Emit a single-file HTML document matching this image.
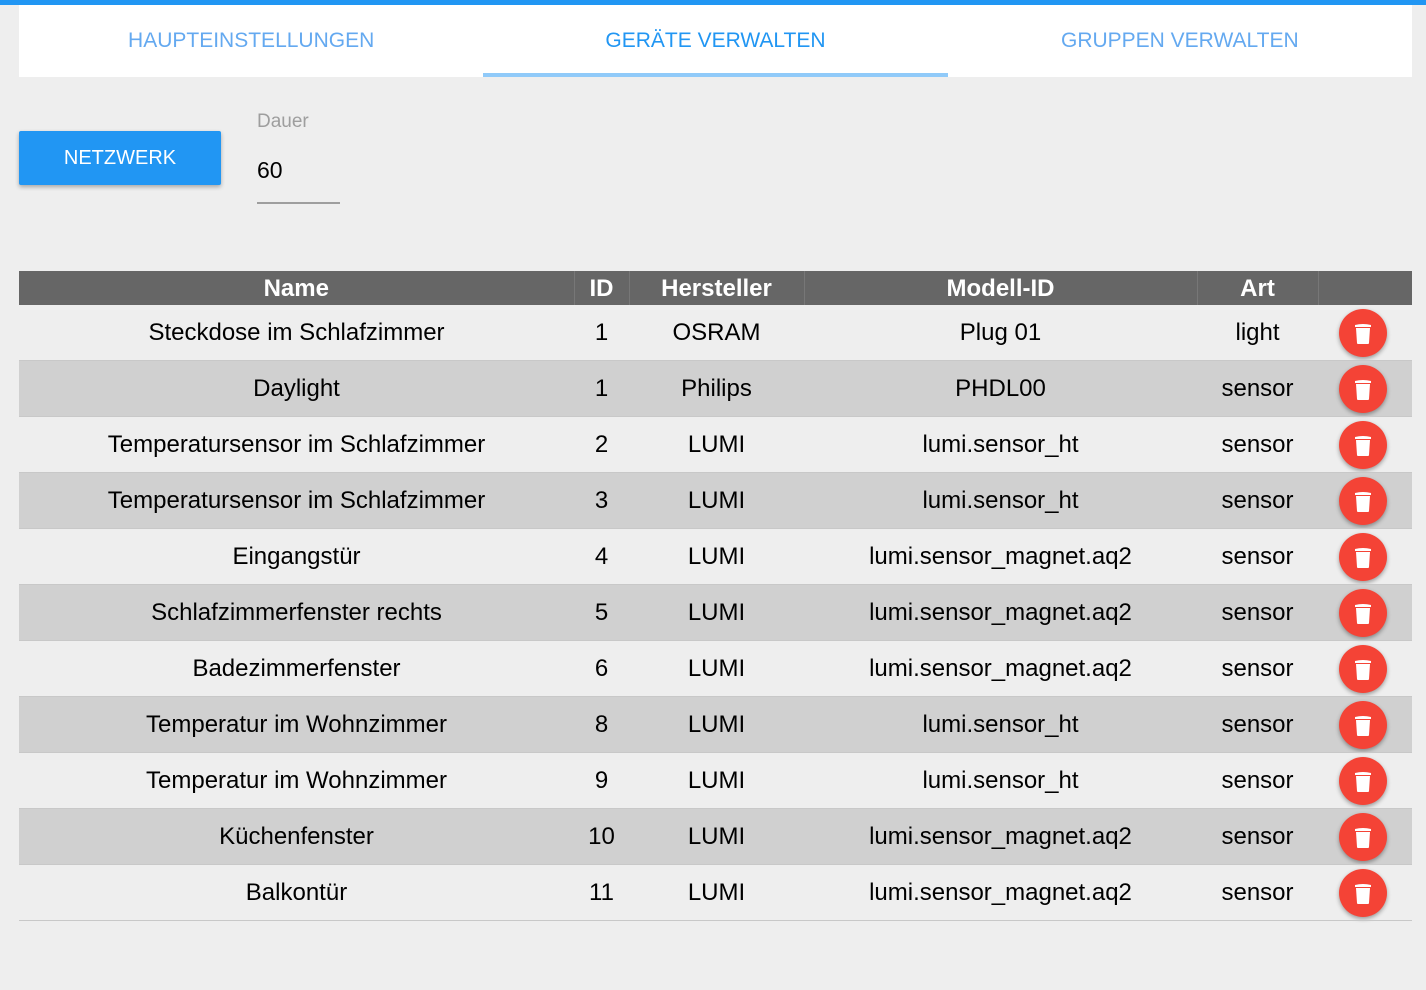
<!DOCTYPE html>
<html><head><meta charset="utf-8"><style>
body{margin:0;background:#eeeeee;font-family:"Liberation Sans",Arial,sans-serif;width:1426px;height:990px;overflow:hidden;position:relative}
.top{position:absolute;left:0;top:0;width:1426px;height:5px;background:#2196f3}
.tabs{position:absolute;left:19px;top:5px;width:1393px;height:72px;background:#fff;display:flex}
.tab{flex:1;text-align:center;line-height:72px;font-size:21px;color:#64a9f0;position:relative}
.tab.a{color:#2196f3}
.tab.a:after{content:"";position:absolute;left:0;right:0;bottom:0;height:4px;background:#90caf9}
.btn{position:absolute;left:19px;top:131px;width:202px;height:54px;background:#2196f3;color:#fff;font-size:20px;text-align:center;line-height:54px;border-radius:2px;box-shadow:0 2px 4px rgba(0,0,0,.3)}
.lbl{position:absolute;left:257px;top:111px;font-size:19px;color:#9e9e9e}
.val{position:absolute;left:257px;top:157px;font-size:23px;color:#000}
.ul{position:absolute;left:257px;top:202px;width:83px;height:2px;background:#9e9e9e}
table{position:absolute;left:19px;top:271px;width:1393px;border-collapse:collapse;font-size:24px}
th{background:#666;color:#fff;height:33px;padding:1px 0 0;font-weight:bold;border-left:1px solid #777}
th:first-child{border-left:none}
td{height:54px;padding:1px 0 0;text-align:center;border-bottom:1px solid #c8c8c8}
#b tr:nth-child(even) td{background:#d0d0d0}
.del{width:48px;height:48px;border-radius:50%;background:#f44336;margin:-1px 0 0 21px;box-shadow:0 2px 4px rgba(0,0,0,.35);display:flex;align-items:center;justify-content:center}
</style></head><body>
<div class="top"></div>
<div class="tabs"><div class="tab">HAUPTEINSTELLUNGEN</div><div class="tab a">GERÄTE VERWALTEN</div><div class="tab">GRUPPEN VERWALTEN</div></div>
<div class="btn">NETZWERK</div>
<div class="lbl">Dauer</div><div class="val">60</div><div class="ul"></div>
<table>
<colgroup><col style="width:555px"><col style="width:55px"><col style="width:175px"><col style="width:393px"><col style="width:121px"><col style="width:94px"></colgroup>
<thead><tr><th>Name</th><th>ID</th><th>Hersteller</th><th>Modell-ID</th><th>Art</th><th></th></tr></thead>
<tbody id="b"></tbody>
</table>
<script>
var d=[["Steckdose im Schlafzimmer",1,"OSRAM","Plug 01","light"],["Daylight",1,"Philips","PHDL00","sensor"],["Temperatursensor im Schlafzimmer",2,"LUMI","lumi.sensor_ht","sensor"],["Temperatursensor im Schlafzimmer",3,"LUMI","lumi.sensor_ht","sensor"],["Eingangstür",4,"LUMI","lumi.sensor_magnet.aq2","sensor"],["Schlafzimmerfenster rechts",5,"LUMI","lumi.sensor_magnet.aq2","sensor"],["Badezimmerfenster",6,"LUMI","lumi.sensor_magnet.aq2","sensor"],["Temperatur im Wohnzimmer",8,"LUMI","lumi.sensor_ht","sensor"],["Temperatur im Wohnzimmer",9,"LUMI","lumi.sensor_ht","sensor"],["Küchenfenster",10,"LUMI","lumi.sensor_magnet.aq2","sensor"],["Balkontür",11,"LUMI","lumi.sensor_magnet.aq2","sensor"]];
var ic='<div class="del"><svg width="18" height="22" viewBox="0 0 18 22"><path d="M1 3Q9 1 17 3v2H1z" fill="#fff"/><path d="M2 6h14l-1 15q0 1-1 1H4q-1 0-1-1z" fill="#fff"/></svg></div>';
var h='';d.forEach(function(r){h+='<tr><td>'+r.join('</td><td>')+'</td><td>'+ic+'</td></tr>'});
document.getElementById('b').innerHTML=h;
</script>
</body></html>
